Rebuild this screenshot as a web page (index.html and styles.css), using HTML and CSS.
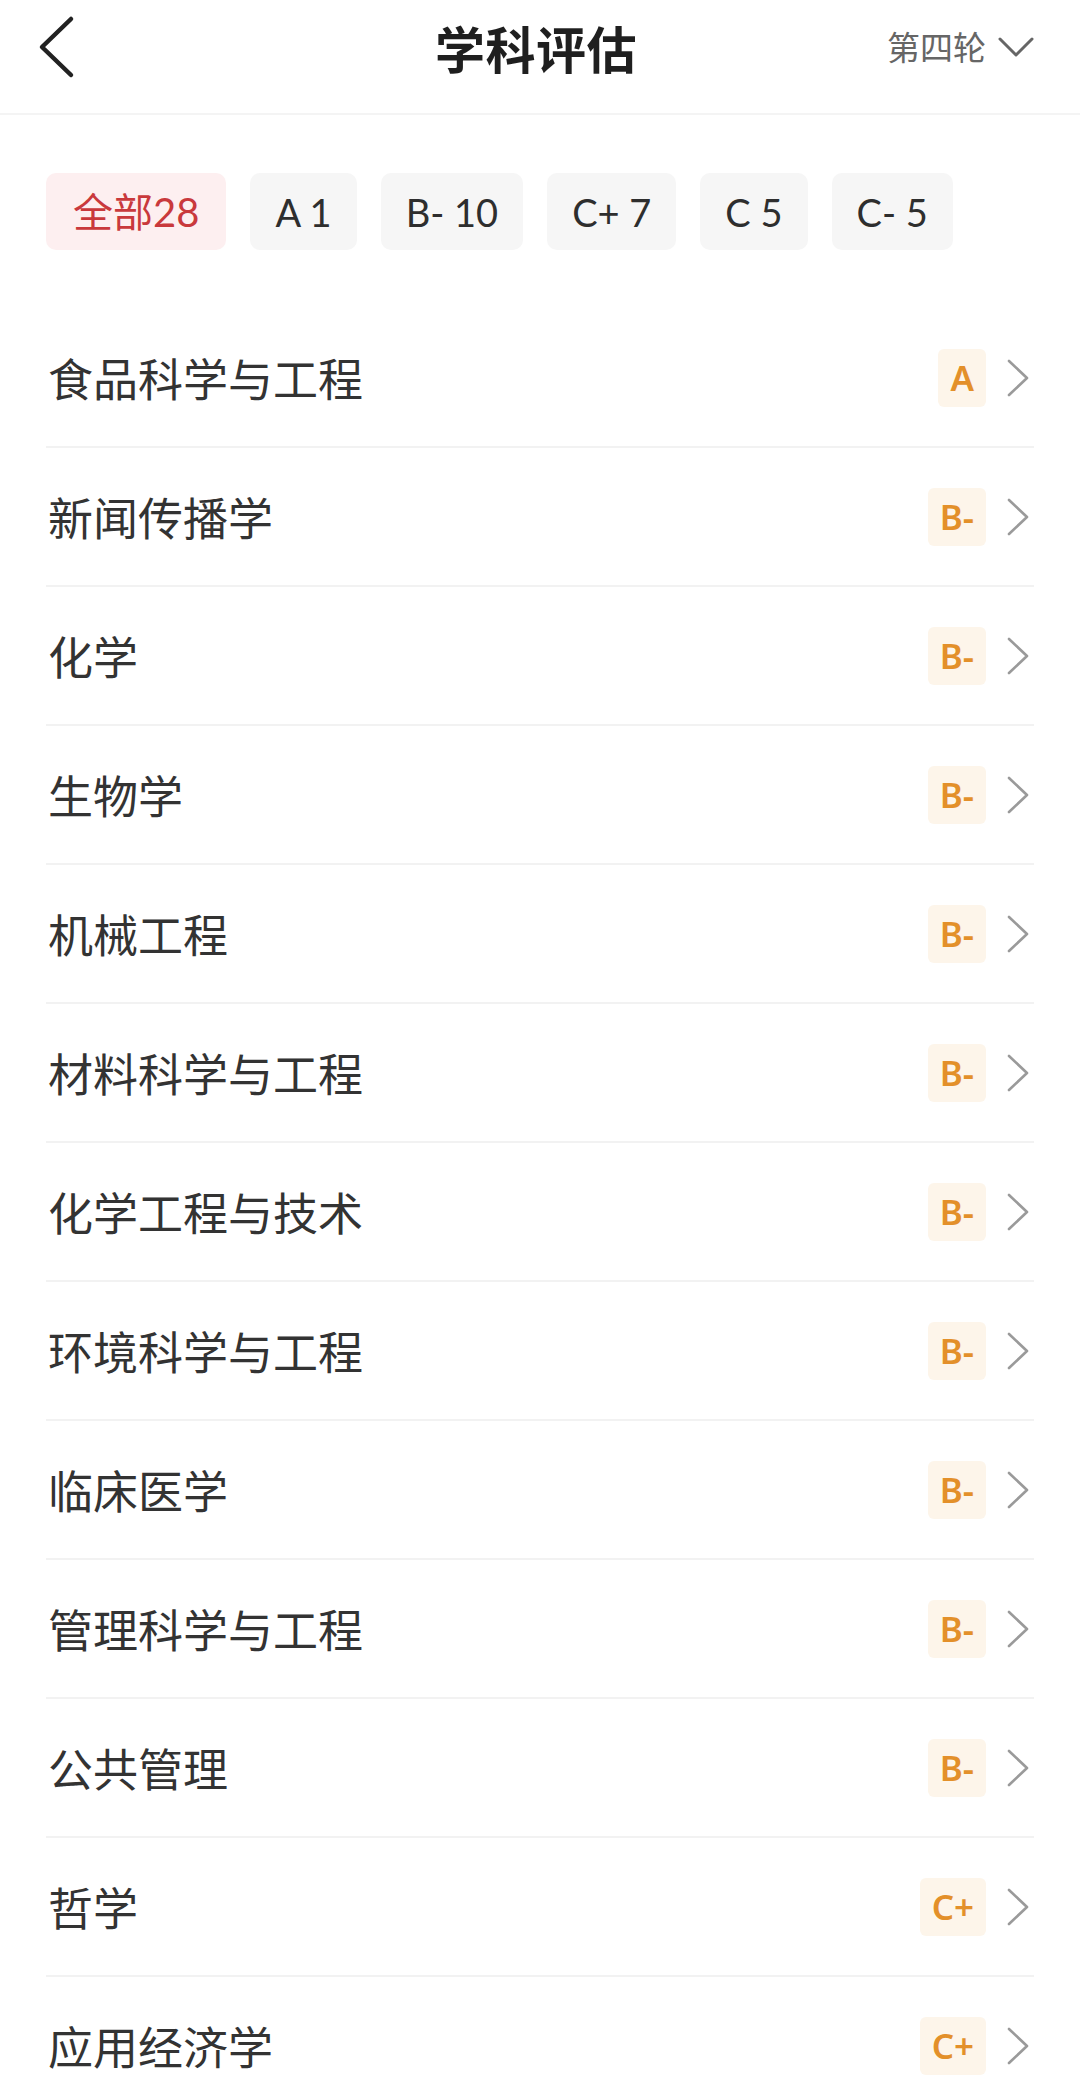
FILE: index.html
```html
<!DOCTYPE html>
<html lang="zh-CN">
<head>
<meta charset="utf-8">
<title>学科评估</title>
<link rel="stylesheet" href="styles.css">
</head>
<body>
<div class="page">
  <header class="header">
    <div class="header-left">
      <svg class="back" width="40" height="64" viewBox="0 0 40 64"><polyline points="33,4 4,32 33,60" fill="none" stroke="#222" stroke-width="4.5" stroke-linecap="round" stroke-linejoin="round"/></svg>
    </div>
    <h1 class="title">学科评估</h1>
    <div class="header-right">
      <span class="round">第四轮</span>
      <svg class="down" width="36" height="22" viewBox="0 0 36 22"><polyline points="2,3 18,19 34,3" fill="none" stroke="#666" stroke-width="3" stroke-linecap="round" stroke-linejoin="round"/></svg>
    </div>
  </header>

  <nav class="tabs">
    <span class="tab active">全部28</span>
    <span class="tab">A 1</span>
    <span class="tab">B- 10</span>
    <span class="tab">C+ 7</span>
    <span class="tab">C 5</span>
    <span class="tab">C- 5</span>
  </nav>

  <ul class="list">
    <li class="row"><span class="name">食品科学与工程</span><span class="right"><span class="grade">A</span><svg class="arrow" width="24" height="38" viewBox="0 0 24 38"><polyline points="3,2 21,19 3,36" fill="none" stroke="#9a9a9a" stroke-width="2.6" stroke-linecap="round" stroke-linejoin="round"/></svg></span></li>
    <li class="row"><span class="name">新闻传播学</span><span class="right"><span class="grade">B-</span><svg class="arrow" width="24" height="38" viewBox="0 0 24 38"><polyline points="3,2 21,19 3,36" fill="none" stroke="#9a9a9a" stroke-width="2.6" stroke-linecap="round" stroke-linejoin="round"/></svg></span></li>
    <li class="row"><span class="name">化学</span><span class="right"><span class="grade">B-</span><svg class="arrow" width="24" height="38" viewBox="0 0 24 38"><polyline points="3,2 21,19 3,36" fill="none" stroke="#9a9a9a" stroke-width="2.6" stroke-linecap="round" stroke-linejoin="round"/></svg></span></li>
    <li class="row"><span class="name">生物学</span><span class="right"><span class="grade">B-</span><svg class="arrow" width="24" height="38" viewBox="0 0 24 38"><polyline points="3,2 21,19 3,36" fill="none" stroke="#9a9a9a" stroke-width="2.6" stroke-linecap="round" stroke-linejoin="round"/></svg></span></li>
    <li class="row"><span class="name">机械工程</span><span class="right"><span class="grade">B-</span><svg class="arrow" width="24" height="38" viewBox="0 0 24 38"><polyline points="3,2 21,19 3,36" fill="none" stroke="#9a9a9a" stroke-width="2.6" stroke-linecap="round" stroke-linejoin="round"/></svg></span></li>
    <li class="row"><span class="name">材料科学与工程</span><span class="right"><span class="grade">B-</span><svg class="arrow" width="24" height="38" viewBox="0 0 24 38"><polyline points="3,2 21,19 3,36" fill="none" stroke="#9a9a9a" stroke-width="2.6" stroke-linecap="round" stroke-linejoin="round"/></svg></span></li>
    <li class="row"><span class="name">化学工程与技术</span><span class="right"><span class="grade">B-</span><svg class="arrow" width="24" height="38" viewBox="0 0 24 38"><polyline points="3,2 21,19 3,36" fill="none" stroke="#9a9a9a" stroke-width="2.6" stroke-linecap="round" stroke-linejoin="round"/></svg></span></li>
    <li class="row"><span class="name">环境科学与工程</span><span class="right"><span class="grade">B-</span><svg class="arrow" width="24" height="38" viewBox="0 0 24 38"><polyline points="3,2 21,19 3,36" fill="none" stroke="#9a9a9a" stroke-width="2.6" stroke-linecap="round" stroke-linejoin="round"/></svg></span></li>
    <li class="row"><span class="name">临床医学</span><span class="right"><span class="grade">B-</span><svg class="arrow" width="24" height="38" viewBox="0 0 24 38"><polyline points="3,2 21,19 3,36" fill="none" stroke="#9a9a9a" stroke-width="2.6" stroke-linecap="round" stroke-linejoin="round"/></svg></span></li>
    <li class="row"><span class="name">管理科学与工程</span><span class="right"><span class="grade">B-</span><svg class="arrow" width="24" height="38" viewBox="0 0 24 38"><polyline points="3,2 21,19 3,36" fill="none" stroke="#9a9a9a" stroke-width="2.6" stroke-linecap="round" stroke-linejoin="round"/></svg></span></li>
    <li class="row"><span class="name">公共管理</span><span class="right"><span class="grade">B-</span><svg class="arrow" width="24" height="38" viewBox="0 0 24 38"><polyline points="3,2 21,19 3,36" fill="none" stroke="#9a9a9a" stroke-width="2.6" stroke-linecap="round" stroke-linejoin="round"/></svg></span></li>
    <li class="row"><span class="name">哲学</span><span class="right"><span class="grade">C+</span><svg class="arrow" width="24" height="38" viewBox="0 0 24 38"><polyline points="3,2 21,19 3,36" fill="none" stroke="#9a9a9a" stroke-width="2.6" stroke-linecap="round" stroke-linejoin="round"/></svg></span></li>
    <li class="row"><span class="name">应用经济学</span><span class="right"><span class="grade">C+</span><svg class="arrow" width="24" height="38" viewBox="0 0 24 38"><polyline points="3,2 21,19 3,36" fill="none" stroke="#9a9a9a" stroke-width="2.6" stroke-linecap="round" stroke-linejoin="round"/></svg></span></li>
  </ul>
</div>
</body>
</html>
```

FILE: styles.css
```css
* { box-sizing: border-box; }
html, body {
  margin: 0;
  padding: 0;
  background: #ffffff;
}
body {
  width: 1080px;
  height: 2082px;
  overflow: hidden;
  font-family: Lato, "Noto Sans CJK SC", sans-serif;
  color: #333333;
}
.page {
  width: 1080px;
}

/* header */
.header {
  height: 115px;
  display: grid;
  grid-template-columns: 1fr auto 1fr;
  align-items: center;
  padding: 0 46px 20px 38px;
  border-bottom: 2px solid #f4f4f4;
}
.header-left {
  display: flex;
  align-items: center;
}
.back {
  display: block;
}
.title {
  margin: 0;
  font-family: "Noto Sans CJK SC", sans-serif;
  font-size: 50px;
  font-weight: 700;
  color: #1f1f1f;
  line-height: 1;
  letter-spacing: 0.5px;
}
.header-right {
  display: flex;
  align-items: center;
  justify-content: flex-end;
  gap: 12px;
}
.round {
  font-family: "Noto Sans CJK SC", sans-serif;
  font-size: 33px;
  color: #666666;
  line-height: 1;
}
.down {
  display: block;
}

/* tabs */
.tabs {
  display: flex;
  gap: 24px;
  padding: 0 46px;
  margin-top: 58px;
}
.tab {
  height: 77px;
  display: flex;
  align-items: center;
  padding: 0 25px;
  border-radius: 10px;
  background: #f6f6f6;
  font-size: 38px;
  color: #2e2e2e;
  line-height: 1;
  white-space: pre;
}
.tab.active {
  background: #fdeff0;
  color: #c9393c;
  font-size: 40px;
  padding: 0 27px;
}

/* list */
.list {
  list-style: none;
  margin: 59px 46px 0;
  padding: 0;
}
.row {
  height: 139px;
  display: flex;
  align-items: center;
  justify-content: space-between;
  border-bottom: 2px solid #f2f2f2;
}
.name {
  font-family: "Noto Sans CJK SC", sans-serif;
  font-size: 45px;
  color: #333333;
  line-height: 1;
  padding-left: 2px;
}
.right {
  display: flex;
  align-items: center;
  gap: 20px;
  padding-right: 4px;
}
.grade {
  height: 58px;
  display: flex;
  align-items: center;
  padding: 0 12px;
  border-radius: 6px;
  background: #fdf5ea;
  color: #e3902a;
  font-family: "Noto Sans", Lato, sans-serif;
  font-size: 35px;
  font-weight: 600;
  line-height: 1;
}
.arrow {
  display: block;
}
```
